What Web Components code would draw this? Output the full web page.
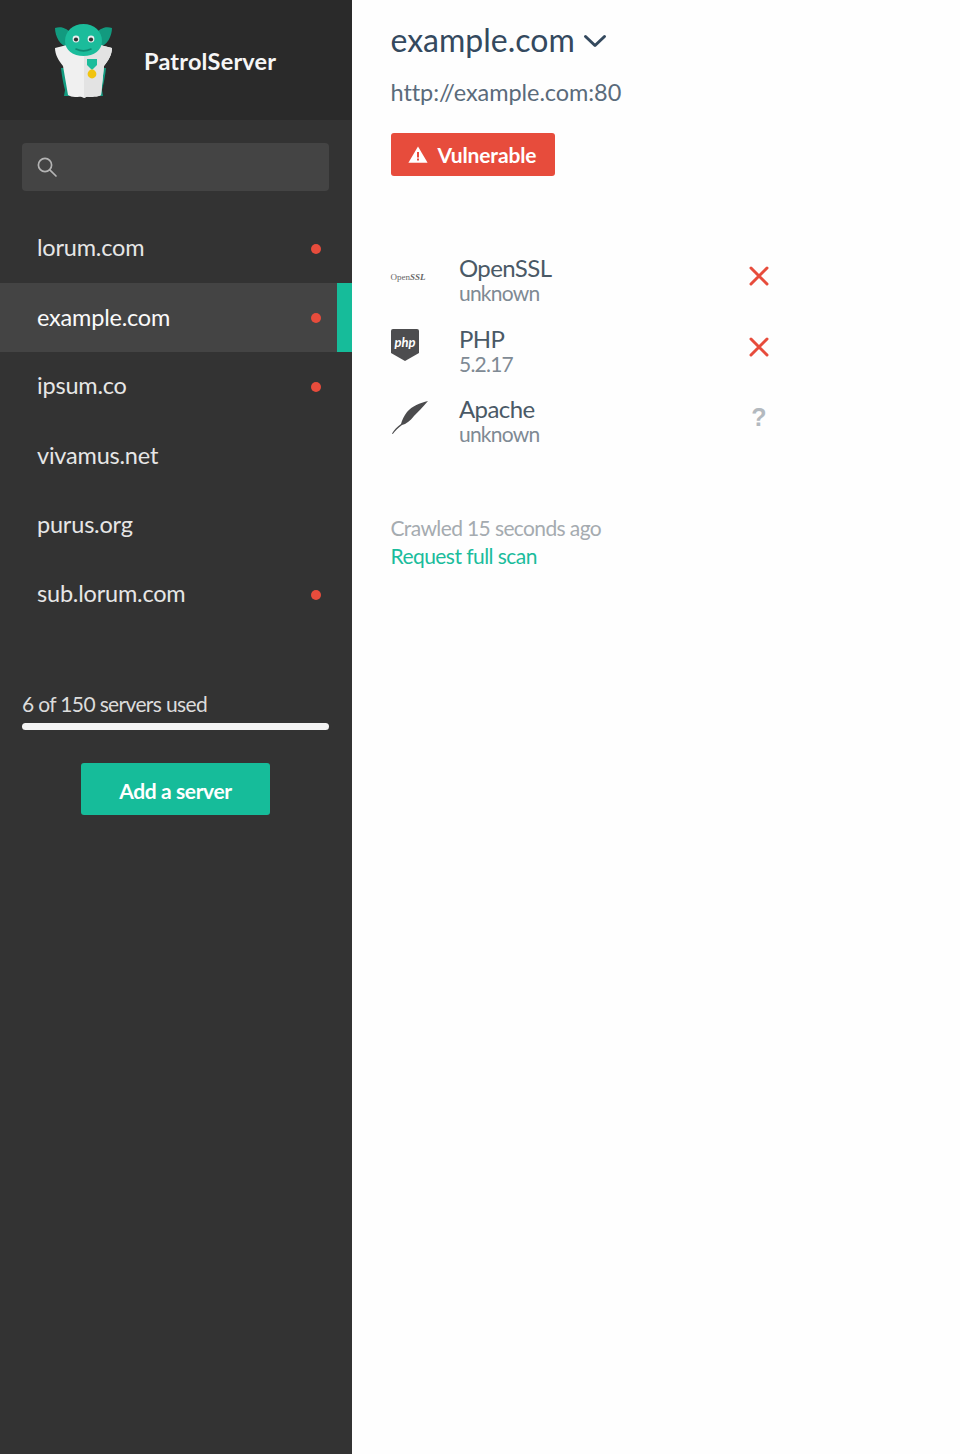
<!DOCTYPE html>
<html>
<head>
<meta charset="utf-8">
<title>PatrolServer</title>
<style>
  html, body { margin: 0; height: 100%; }
  body { font-family: Lato, sans-serif; background: #fefefe; }
</style>
</head>
<body>
<patrol-app>
  <patrol-sidebar slot="sidebar">
    <nav-item name="lorum.com" alert></nav-item>
    <nav-item name="example.com" alert active></nav-item>
    <nav-item name="ipsum.co" alert></nav-item>
    <nav-item name="vivamus.net"></nav-item>
    <nav-item name="purus.org"></nav-item>
    <nav-item name="sub.lorum.com" alert></nav-item>
  </patrol-sidebar>
  <server-detail slot="main">
    <software-row name="OpenSSL" version="unknown" status="bad" icon="openssl"></software-row>
    <software-row name="PHP" version="5.2.17" status="bad" icon="php"></software-row>
    <software-row name="Apache" version="unknown" status="unknown" icon="apache"></software-row>
  </server-detail>
</patrol-app>

<script>
  class PatrolApp extends HTMLElement {
    constructor() {
      super();
      this.attachShadow({mode: "open"}).innerHTML = `
        <style>
          :host { display: flex; height: 1454px; }
          .side { width: 352px; flex: none; display: flex; }
          .main { flex: 1; }
        </style>
        <div class="side"><slot name="sidebar"></slot></div>
        <div class="main"><slot name="main"></slot></div>`;
    }
  }

  class PatrolSidebar extends HTMLElement {
    constructor() {
      super();
      this.attachShadow({mode: "open"}).innerHTML = `
        <style>
          :host { display: block; width: 352px; background: #333333; color: #e9e9e9; }
          .brand { height: 120px; background: #2a2a2a; display: flex; align-items: center; padding-left: 52px; box-sizing: border-box; }
          .brand svg { width: 62px; height: 78px; margin-top: 2px; flex: none; }
          .brand span { margin-left: 30px; padding-top: 2px; font-size: 23.5px; font-weight: 700; color: #f6f6f6; letter-spacing: 0.2px; }
          .search { margin: 23px 22px; height: 48px; width: 307px; background: #444444; border-radius: 4px; display: flex; align-items: center; padding-left: 14px; box-sizing: border-box; }
          .usage { margin: 62px 22px 0; width: 307px; }
          .usage p { margin: 0; font-size: 21px; line-height: 26px; color: #dcdcdc; letter-spacing: -0.65px; }
          .bar { height: 7px; margin-top: 6px; border-radius: 4px; background: #f4f4f4; }
          .add { display: flex; align-items: center; justify-content: center; width: 189px; height: 52px; margin: 33px 0 0 81px; padding-top: 3px; box-sizing: border-box; border-radius: 3px; background: #16bc9a; color: #fff; font-size: 21px; font-weight: 700; letter-spacing: -0.4px; }
        </style>
        <div class="brand">
          <svg viewBox="0 0 62 78">
            <path d="M16 25C8 24 3 14 3 6c6-2 13 0 18 8zM47 25c8-1 13-11 13-19-6-2-13 0-18 8z" fill="#129a7f"/>
            <path d="M9 46C10 56 12 64 13 68l-1 6 39 0-1-6c1-4 3-12 4-22z" fill="#129a7f"/>
            <path d="M3 26l12-3 33 0 12 3c0 7-4 13-8 18l-3 29c-3 2-6 1-9 2-3 0-5-1-8 1-3-2-6-1-9-1-3 0-5-1-7-2L11 44C7 39 3 33 3 26z" fill="#f0f0f0"/>
            <path d="M32 30l16-7 12 3c0 7-4 13-8 18l-3 29c-3 2-6 1-9 2-3 0-5-1-8 1z" fill="#e3e3e3"/>
            <path d="M13 19C13 9 21 2 31.500 2S50 9 50 19c0 9-8 15-18.500 15S13 28 13 19z" fill="#1bbc9b"/>
            <circle cx="24" cy="17" r="3.400" fill="#e8eef0"/><circle cx="24" cy="17.500" r="2.100" fill="#333"/>
            <circle cx="39" cy="17" r="3.400" fill="#e8eef0"/><circle cx="39" cy="17.500" r="2.100" fill="#333"/>
            <path d="M24 27c5 2.500 10 2.500 15 0" stroke="#0f8a72" stroke-width="1.600" fill="none" stroke-linecap="round"/>
            <path d="M35 37h10v6l-5 5-5-5z" fill="#1bbc9b"/>
            <circle cx="40" cy="52" r="4.400" fill="#f1c40f"/>
          </svg>
          <span>PatrolServer</span>
        </div>
        <div class="search">
          <svg width="22" height="22" viewBox="0 0 22 22" fill="none" stroke="#b4b4b4" stroke-width="1.700">
            <circle cx="9" cy="9" r="6.600"/><path d="M13.800 13.800L20 20" stroke-linecap="round"/>
          </svg>
        </div>
        <slot></slot>
        <div class="usage">
          <p>6 of 150 servers used</p>
          <div class="bar"></div>
        </div>
        <div class="add">Add a server</div>`;
    }
  }

  class NavItem extends HTMLElement {
    constructor() {
      super();
      const active = this.hasAttribute("active");
      this.attachShadow({mode: "open"}).innerHTML = `
        <style>
          :host { display: flex; align-items: center; height: 69.2px; padding: 0 0 3px 37px; font-size: 23.5px; letter-spacing: -0.2px; color: #e6e6e6; position: relative; box-sizing: border-box; }
          :host([active]) { background: #444444; color: #fafafa; padding-bottom: 1px; }
          .dot { position: absolute; left: 311px; top: 50%; width: 10px; height: 10px; margin-top: -5px; border-radius: 50%; background: #e74c3c; }
          .edge { position: absolute; right: 0; top: 0; bottom: 0; width: 15px; background: #16bc9a; }
        </style>
        <span></span>
        ${this.hasAttribute("alert") ? '<i class="dot"></i>' : ""}
        ${active ? '<i class="edge"></i>' : ""}`;
      this.shadowRoot.querySelector("span").textContent = this.getAttribute("name");
    }
  }

  class ServerDetail extends HTMLElement {
    constructor() {
      super();
      this.attachShadow({mode: "open"}).innerHTML = `
        <style>
          :host { display: block; padding: 19px 0 0 38.5px; color: #34495e; }
          h1 { margin: 0; font-size: 32px; font-weight: 400; line-height: 42px; display: flex; align-items: center; }
          h1 svg { margin-left: 8px; margin-top: 2px; }
          .url { margin: 18px 0 0; font-size: 23.5px; line-height: 26px; letter-spacing: -0.07px; color: #5a6b7b; }
          .badge { display: inline-flex; align-items: center; margin-top: 28px; width: 164px; height: 43px; box-sizing: border-box; padding-left: 17px; border-radius: 3px; background: #e74c3c; color: #fff; font-size: 21px; font-weight: 700; letter-spacing: -0.15px; }
          .badge svg { margin-right: 10px; }
          .list { margin-top: 79px; }
          .meta { margin: 47px 0 0; font-size: 21px; line-height: 28px; letter-spacing: -0.62px; color: #a5abb0; }
          .meta span { display: block; color: #1abc9c; letter-spacing: -0.55px; }
        </style>
        <h1>example.com
          <svg width="24" height="14" viewBox="0 0 24 14" fill="none" stroke="#34495e" stroke-width="3" stroke-linecap="round" stroke-linejoin="round"><path d="M2.500 2.500L12 11.500 21.500 2.500"/></svg>
        </h1>
        <p class="url">http://example.com:80</p>
        <div class="badge">
          <svg width="20" height="17" viewBox="0 0 20 17"><path d="M10 .5L19.600 16.800H.4z" fill="#fff"/><path d="M9 6h2v5.500H9zM9 12.500h2v2H9z" fill="#e74c3c"/></svg>
          Vulnerable
        </div>
        <div class="list"><slot></slot></div>
        <p class="meta">Crawled 15 seconds ago<span>Request full scan</span></p>`;
    }
  }

  const SOFTWARE_ICONS = {
    openssl: `<span class="ossl">Open<b>SSL</b></span>`,
    php: `<svg class="php" width="28" height="32" viewBox="0 0 28 32"><path d="M2 0h24a2 2 0 0 1 2 2v22L14 32 0 24V2a2 2 0 0 1 2-2z" fill="#4d4d4f"/><text x="14" y="17.500" text-anchor="middle" font-family="Lato, sans-serif" font-style="italic" font-weight="700" font-size="13" fill="#fff">php</text></svg>`,
    apache: `<svg width="38" height="34" viewBox="0 0 38 34"><path d="M37 1C29 3 21 6 16 12 13 16 11 20 10 24 6 27 3 30 1 33.500L1.800 34C4 31 7 28 11 25 15 24 19 21 23 16 27 12 32 7 37 1z" fill="#4b4b4d"/></svg>`
  };

  class SoftwareRow extends HTMLElement {
    constructor() {
      super();
      const bad = this.getAttribute("status") === "bad";
      this.attachShadow({mode: "open"}).innerHTML = `
        <style>
          :host { display: flex; align-items: flex-start; height: 70.5px; }
          .icon { width: 68.5px; height: 42px; flex: none; display: flex; align-items: center; }
          .php { margin-top: -4px; }
          .ossl { margin-top: 2px; font-family: "Liberation Serif", serif; font-size: 9px; color: #666; letter-spacing: 0; }
          .ossl b { font-style: italic; }
          .text { width: 288px; flex: none; }
          .name { font-size: 24px; line-height: 26px; letter-spacing: -0.6px; color: #4a5966; }
          .ver { font-size: 21px; line-height: 23px; letter-spacing: -0.78px; color: #7f8a94; }
          .state { width: 24px; height: 42px; display: flex; align-items: center; justify-content: center; }
          .q { font-family: "Liberation Sans", sans-serif; font-size: 25px; font-weight: 700; color: #b3b9bf; }
        </style>
        <div class="icon">${SOFTWARE_ICONS[this.getAttribute("icon")]}</div>
        <div class="text"><div class="name"></div><div class="ver"></div></div>
        <div class="state">${bad
          ? '<svg width="20" height="20" viewBox="0 0 20 20" stroke="#e74c3c" stroke-width="3" stroke-linecap="round"><path d="M2 2l16 16M18 2L2 18"/></svg>'
          : '<span class="q">?</span>'}</div>`;
      this.shadowRoot.querySelector(".name").textContent = this.getAttribute("name");
      this.shadowRoot.querySelector(".ver").textContent = this.getAttribute("version");
    }
  }

  customElements.define("patrol-app", PatrolApp);
  customElements.define("patrol-sidebar", PatrolSidebar);
  customElements.define("nav-item", NavItem);
  customElements.define("server-detail", ServerDetail);
  customElements.define("software-row", SoftwareRow);
</script>
</body>
</html>
